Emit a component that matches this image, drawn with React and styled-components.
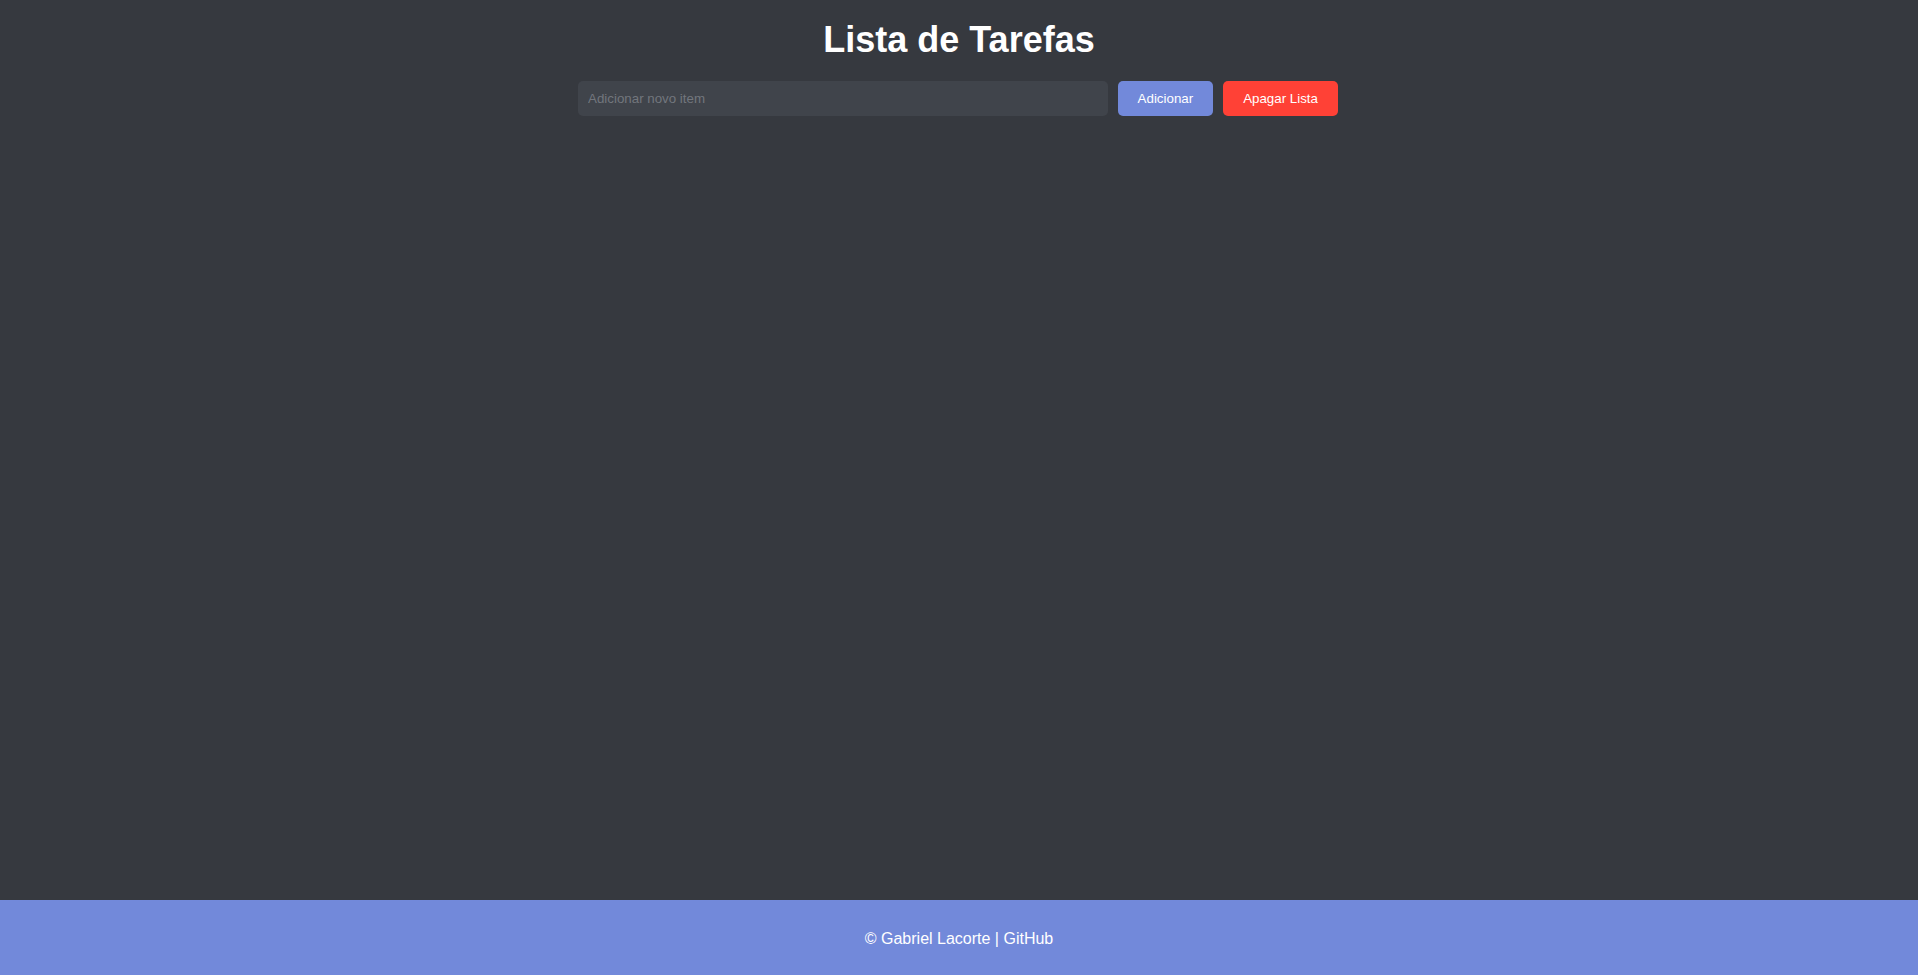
import React, { useState } from "react";
import styled, { createGlobalStyle } from "styled-components";

const GlobalStyle = createGlobalStyle`
  html, body {
    margin: 0;
    padding: 0;
    background: #36393f;
    font-family: "Liberation Sans", Arial, sans-serif;
  }
  #root {
    min-height: 100vh;
  }
`;

const Page = styled.div`
  min-height: 100vh;
  display: flex;
  flex-direction: column;
  background: #36393f;
  color: #ffffff;
`;

const Main = styled.main`
  flex: 1;
  display: flex;
  flex-direction: column;
  align-items: center;
  padding-top: 20px;
`;

const Title = styled.h1`
  margin: 0 0 21px;
  font-size: 36px;
  font-weight: bold;
  line-height: 40px;
  color: #ffffff;
`;

const Form = styled.form`
  display: flex;
  gap: 10px;
  width: 760px;
  padding-right: 2px;
`;

const Input = styled.input`
  flex: 1;
  min-width: 0;
  height: 35px;
  box-sizing: border-box;
  padding: 10px;
  border: none;
  border-radius: 5px;
  background: #40444b;
  color: #dcddde;
  font-family: "Liberation Sans", Arial, sans-serif;
  font-size: 13.333px;
  outline: none;
  &::placeholder {
    color: #72767d;
  }
`;

const Button = styled.button`
  height: 35px;
  box-sizing: border-box;
  padding: 10px 20px;
  border: none;
  border-radius: 5px;
  background: ${(p) => (p.$danger ? "#ff4136" : "#7289da")};
  color: #ffffff;
  font-family: "Liberation Sans", Arial, sans-serif;
  font-size: 13.333px;
  cursor: pointer;
  white-space: nowrap;
`;

const Footer = styled.footer`
  height: 75px;
  box-sizing: border-box;
  padding-top: 2px;
  display: flex;
  align-items: center;
  justify-content: center;
  background: #7289da;
  color: #ffffff;
  font-size: 16px;
`;

const FooterLink = styled.a`
  color: #ffffff;
  text-decoration: none;
`;

export default function App() {
  const [value, setValue] = useState("");
  return (
    <>
      <GlobalStyle />
      <Page>
        <Main>
          <Title>Lista de Tarefas</Title>
          <Form onSubmit={(e) => e.preventDefault()}>
            <Input
              placeholder="Adicionar novo item"
              value={value}
              onChange={(e) => setValue(e.target.value)}
            />
            <Button type="submit">Adicionar</Button>
            <Button type="button" $danger>
              Apagar Lista
            </Button>
          </Form>
        </Main>
        <Footer>
          <span>
            © Gabriel Lacorte | <FooterLink href="#">GitHub</FooterLink>
          </span>
        </Footer>
      </Page>
    </>
  );
}
